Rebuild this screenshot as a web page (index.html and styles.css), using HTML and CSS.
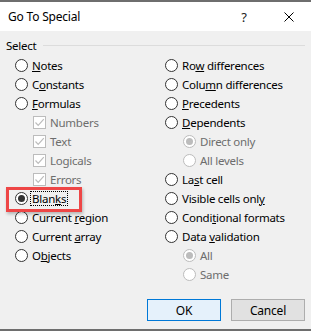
FILE: index.html
```html
<!DOCTYPE html>
<html lang="en">
<head>
  <meta charset="UTF-8">
  <title>Go To Special</title>
  <link rel="stylesheet" href="styles.css">
</head>
<body>
  <div class="dialog">
    <div class="titlebar">
      <span class="title">Go To Special</span>
      <span class="help">?</span>
      <span class="close">
        <svg width="10" height="10" viewBox="0 0 10 10"><path d="M0.5 0.5 L9.5 9.5 M9.5 0.5 L0.5 9.5" stroke="#000" stroke-width="1" fill="none"/></svg>
      </span>
    </div>

    <div class="content">
      <div class="group-label">
        <span>Select</span>
        <span class="rule"></span>
      </div>

      <div class="columns">
        <div class="col">
          <div class="row"><span class="radio"></span><span><u>N</u>otes</span></div>
          <div class="row"><span class="radio"></span><span>C<u>o</u>nstants</span></div>
          <div class="row"><span class="radio"></span><span><u>F</u>ormulas</span></div>
          <div class="row sub disabled"><span class="check"><svg width="11" height="11" viewBox="0 0 11 11"><path d="M1.5 5.5 L4.2 8.3 L9.8 2.2" stroke="#bcbcbc" stroke-width="1.2" fill="none"/></svg></span><span>Numbers</span></div>
          <div class="row sub disabled"><span class="check"><svg width="11" height="11" viewBox="0 0 11 11"><path d="M1.5 5.5 L4.2 8.3 L9.8 2.2" stroke="#bcbcbc" stroke-width="1.2" fill="none"/></svg></span><span>Text</span></div>
          <div class="row sub disabled"><span class="check"><svg width="11" height="11" viewBox="0 0 11 11"><path d="M1.5 5.5 L4.2 8.3 L9.8 2.2" stroke="#bcbcbc" stroke-width="1.2" fill="none"/></svg></span><span>Logicals</span></div>
          <div class="row sub disabled"><span class="check"><svg width="11" height="11" viewBox="0 0 11 11"><path d="M1.5 5.5 L4.2 8.3 L9.8 2.2" stroke="#bcbcbc" stroke-width="1.2" fill="none"/></svg></span><span>Errors</span></div>
          <div class="row"><span class="radio checked"></span><span class="focus">Blan<u>k</u>s</span></div>
          <div class="row"><span class="radio"></span><span>Current <u>r</u>egion</span></div>
          <div class="row"><span class="radio"></span><span>Current <u>a</u>rray</span></div>
          <div class="row"><span class="radio"></span><span>O<u>b</u>jects</span></div>
        </div>
        <div class="col">
          <div class="row"><span class="radio"></span><span>Ro<u>w</u> differences</span></div>
          <div class="row"><span class="radio"></span><span>Colu<u>m</u>n differences</span></div>
          <div class="row"><span class="radio"></span><span><u>P</u>recedents</span></div>
          <div class="row"><span class="radio"></span><span><u>D</u>ependents</span></div>
          <div class="row sub disabled"><span class="radio checked"></span><span>Direct only</span></div>
          <div class="row sub disabled"><span class="radio"></span><span>All levels</span></div>
          <div class="row"><span class="radio"></span><span>La<u>s</u>t cell</span></div>
          <div class="row"><span class="radio"></span><span>Visible cells onl<u>y</u></span></div>
          <div class="row"><span class="radio"></span><span>Condi<u>t</u>ional formats</span></div>
          <div class="row"><span class="radio"></span><span>Data <u>v</u>alidation</span></div>
          <div class="row sub disabled"><span class="radio checked"></span><span>All</span></div>
          <div class="row sub disabled"><span class="radio"></span><span>Same</span></div>
        </div>
      </div>

      <div class="actions">
        <button class="btn default">OK</button>
        <button class="btn">Cancel</button>
      </div>
    </div>

    <div class="highlight"></div>
  </div>
</body>
</html>
```

FILE: styles.css
```css
body {
  margin: 0;
  width: 311px;
  height: 331px;
  background: #f0f0f0;
  font-family: "Segoe UI", "Noto Sans", sans-serif;
  font-size: 11.5px;
  letter-spacing: -0.25px;
  color: #000;
  overflow: hidden;
}
.dialog {
  position: relative;
  height: 327px;
  border-top: 2px solid #6e6e6e;
  border-bottom: 2px solid #6e6e6e;
}
.titlebar {
  height: 29px;
  background: #fff;
  display: flex;
  align-items: center;
  padding-left: 8px;
  font-size: 12px;
  letter-spacing: -0.2px;
}
.title {
  flex: 1;
}
.help {
  width: 46px;
  text-align: center;
  font-size: 13px;
  color: #222;
}
.close {
  width: 44px;
  display: flex;
  justify-content: center;
  align-items: center;
}
.content {
  padding-top: 7px;
}
.group-label {
  height: 14px;
  display: flex;
  align-items: center;
  padding-left: 6px;
  padding-right: 6px;
}
.rule {
  flex: 1;
  height: 1px;
  background: #dcdcdc;
  margin-left: 7px;
}
.columns {
  display: grid;
  grid-template-columns: 150px 1fr;
  margin-top: 4px;
}
.col {
  padding-left: 15px;
}
.row {
  height: 19px;
  display: flex;
  align-items: center;
  gap: 4px;
  white-space: nowrap;
}
.row.sub {
  padding-left: 18px;
}
.row.disabled {
  color: #6d6d6d;
}
.radio {
  width: 13px;
  height: 13px;
  box-sizing: border-box;
  border: 1px solid #333;
  border-radius: 50%;
  background: #fff;
  display: flex;
  align-items: center;
  justify-content: center;
  flex-shrink: 0;
}
.radio.checked::after {
  content: "";
  width: 7px;
  height: 7px;
  border-radius: 50%;
  background: #333;
}
.disabled .radio {
  border-color: #bcbcbc;
}
.disabled .radio.checked::after {
  background: #bcbcbc;
}
.check {
  width: 13px;
  height: 13px;
  box-sizing: border-box;
  border: 1px solid #bcbcbc;
  background: #fff;
  display: flex;
  align-items: center;
  justify-content: center;
  flex-shrink: 0;
}
.focus {
  outline: 1px dotted #000;
  outline-offset: 0;
  padding: 0 1px;
  margin-left: -1px;
  line-height: 13px;
}
.actions {
  display: flex;
  justify-content: flex-end;
  gap: 10px;
  padding-right: 6px;
  margin-top: 15px;
}
.btn {
  width: 74px;
  height: 22px;
  box-sizing: border-box;
  font-family: inherit;
  font-size: 12px;
  letter-spacing: -0.2px;
  color: #000;
  background: #e1e1e1;
  border: 1px solid #adadad;
  padding: 0;
}
.btn.default {
  background: #e5f1fb;
  border-color: #0078d7;
}
.highlight {
  position: absolute;
  left: 6px;
  top: 185px;
  width: 76px;
  height: 25px;
  box-sizing: border-box;
  border: 3px solid #ee4646;
  box-shadow: 1px 2px 3px rgba(0, 0, 0, 0.25);
}
```
